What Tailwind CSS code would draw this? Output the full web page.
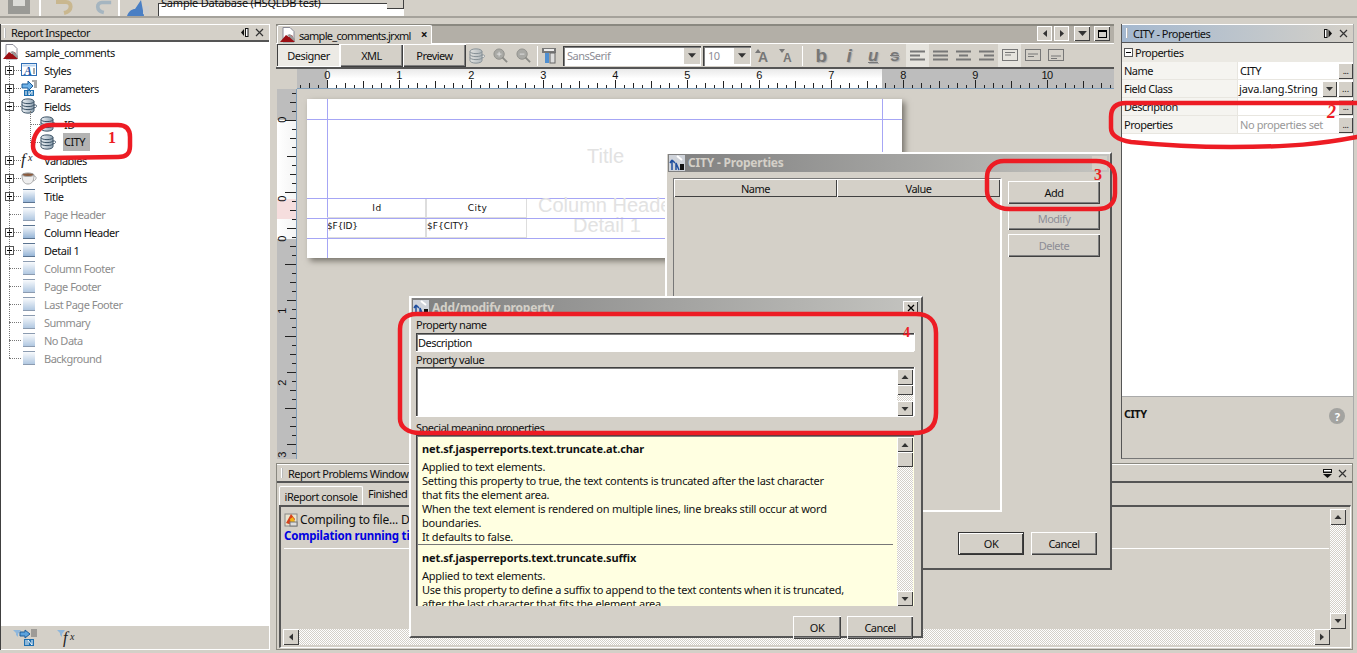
<!DOCTYPE html>
<html lang="en">
<head>
  <meta charset="UTF-8">
  <title>iReport Designer</title>
  <script src="https://cdn.jsdelivr.net/npm/@tailwindcss/browser@4"></script>
</head>
<body class="bg-[#d4d0c8]">
<svg class="absolute w-0 h-0">
  <defs>
    <linearGradient id="dbg" x1="0" x2="1" y1="0" y2="0"><stop offset="0" stop-color="#f0f4f7"/><stop offset="1" stop-color="#8da0b0"/></linearGradient>
    <linearGradient id="bandg" x1="0" x2="0" y1="0" y2="1"><stop offset="0" stop-color="#ffffff"/><stop offset="1" stop-color="#8fb0d4"/></linearGradient>
    <symbol id="plus" viewBox="0 0 9 9"><rect x=".5" y=".5" width="8" height="8" fill="#fff" stroke="#555"/><path d="M2 4.500h5M4.500 2v5" stroke="#000"/></symbol>
    <symbol id="minus" viewBox="0 0 9 9"><rect x=".5" y=".5" width="8" height="8" fill="#fff" stroke="#555"/><path d="M2 4.500h5" stroke="#000"/></symbol>
    <symbol id="db" viewBox="0 0 16 16"><path d="M13 7c3-.5 3.500 1.500 1.500 2.500L12 10z" fill="#fff" stroke="#4a6072"/><path d="M1 3.500c0-3.500 12-3.500 12 0v9c0 3.500-12 3.500-12 0z" fill="url(#dbg)" stroke="#3c5366"/><path d="M1 3.500c0 2.800 12 2.800 12 0M1 6.500c0 2.800 12 2.800 12 0M1 9.500c0 2.800 12 2.800 12 0" fill="none" stroke="#3c5366"/></symbol>
    <symbol id="report" viewBox="0 0 16 16"><path d="M3 .5h7l4 4v10.500H3z" fill="#fff" stroke="#8a8a96"/><path d="M0 15l6-7 3 2 3-2 3 7z" fill="#9c0f14"/><path d="M7 8l3-1 5 5v3z" fill="#9a9a9a"/></symbol>
    <symbol id="styles" viewBox="0 0 16 16"><rect x=".5" y="1.500" width="15" height="12" fill="#fff" stroke="#2f6eb5"/><rect x="1.500" y="2.500" width="13" height="2" fill="#b9d4ef"/><text x="3" y="12.500" font-family="Liberation Serif" font-style="italic" font-weight="700" font-size="12" fill="#1c56a5">A</text><path d="M12 7h2M12 9h2M12 11h2" stroke="#555"/></symbol>
    <symbol id="params" viewBox="0 0 16 16"><path d="M1 4h6V1l5 5-5 5V8H1z" fill="#6fb2e8" stroke="#1d5c99"/><path d="M11 1h5M13 3h3M13 5h3M13 7h3" stroke="#555"/><rect x="3" y="10" width="10" height="6" fill="#1d6fb0"/><path d="M5 11v4M8 11v4l3-4v4" stroke="#fff" fill="none"/></symbol>
    <symbol id="fx" viewBox="0 0 16 16"><text x="0" y="13" font-family="Liberation Serif" font-style="italic" font-size="16" fill="#222">f</text><text x="7" y="9" font-family="Liberation Serif" font-style="italic" font-size="10" fill="#222">x</text></symbol>
    <symbol id="cup" viewBox="0 0 16 16"><ellipse cx="7" cy="5" rx="6" ry="2" fill="#8a5a3c" stroke="#999"/><path d="M1 5c0 6 2 9 6 9s6-3 6-9c-2 2-10 2-12 0z" fill="#eee" stroke="#aaa"/><path d="M13 6c3 0 3 4-1 5" fill="none" stroke="#aaa"/></symbol>
    <symbol id="band" viewBox="0 0 16 16"><rect x="2" y="1" width="12" height="14" fill="url(#bandg)"/><path d="M2 1.500h12M2 14.500h12" stroke="#5a7390"/></symbol>
    <symbol id="bandoff" viewBox="0 0 16 16"><rect x="2" y="1" width="12" height="14" fill="url(#bandg)" opacity=".75"/><path d="M2 1.500h12M2 14.500h12" stroke="#8b9bb0"/></symbol>
    <symbol id="up" viewBox="0 0 7 4"><path d="M0 4L3.500 0 7 4z" fill="#333"/></symbol>
    <symbol id="down" viewBox="0 0 7 4"><path d="M0 0L3.500 4 7 0z" fill="#333"/></symbol>
    <symbol id="left" viewBox="0 0 4 7"><path d="M4 0L0 3.500 4 7z" fill="#333"/></symbol>
    <symbol id="right" viewBox="0 0 4 7"><path d="M0 0L4 3.500 0 7z" fill="#333"/></symbol>
    <symbol id="wizard" viewBox="0 0 16 16"><rect width="16" height="16" fill="#cfd3da"/><path d="M3 15V6M3 5l-2 3M3 5l3 3M7 15V8l3 7" stroke="#1f4f9f" stroke-width="1.500" fill="none"/><path d="M11 9h4v6h-4z" fill="#111"/><path d="M8 1l5 4" stroke="#fff" stroke-width="2"/></symbol>
    <symbol id="zoomplus" viewBox="0 0 16 16"><circle cx="6.500" cy="6.500" r="5.500" fill="#a9a9a5" stroke="#8f8f8b"/><path d="M4 6.500h5M6.500 4v5" stroke="#e0e0e0"/><path d="M10 10l5 5" stroke="#8a8a86" stroke-width="2"/></symbol>
    <symbol id="zoomminus" viewBox="0 0 16 16"><circle cx="6.500" cy="6.500" r="5.500" fill="#a9a9a5" stroke="#8f8f8b"/><path d="M4 6.500h5" stroke="#e0e0e0"/><path d="M10 10l5 5" stroke="#8a8a86" stroke-width="2"/></symbol>
    <pattern id="hticks" width="72" height="19" patternUnits="userSpaceOnUse" patternTransform="translate(30 0)"><path d="M.5 11v8M9.500 16v3M18.500 14v5M27.500 16v3M36.500 12v7M45.500 16v3M54.500 14v5M63.500 16v3" stroke="#222" fill="none"/></pattern>
    <pattern id="vticks" width="19" height="72" patternUnits="userSpaceOnUse" patternTransform="translate(0 31)"><path d="M8 .5h11M15 9.500h4M13 18.500h6M15 27.500h4M10 36.500h9M15 45.500h4M13 54.500h6M15 63.500h4" stroke="#222" fill="none"/></pattern>
  </defs>
</svg>

<div class="relative w-[1357px] h-[653px] overflow-hidden bg-[#d4d0c8] text-[11px] leading-none tracking-[-0.5px] text-[#111] font-['Noto_Sans',sans-serif]">

  <!-- top toolbar -->
  <div class="h-[18px] border-b-2 border-b-[#a5a29b] flex items-end overflow-hidden">
    <div class="flex items-center gap-[10px] pl-[8px] w-[41px] h-[16px] border-r-2 border-r-[#fff]">
      <svg class="w-[22px] h-[16px]" viewBox="0 0 22 16"><path d="M0 0h22v14H0z" fill="#9a9a96"/><path d="M5 0h12v6H5z" fill="#dcdcd8"/></svg>
    </div>
    <div class="flex items-center gap-[14px] pl-[10px] w-[79px] h-[16px] border-r-2 border-r-[#fff]">
      <svg class="w-[26px] h-[16px]" viewBox="0 0 24 16"><path d="M4 2h10c6 0 7 9-2 11" fill="none" stroke="#c9b78f" stroke-width="4"/></svg>
      <svg class="w-[22px] h-[16px]" viewBox="0 0 24 16"><path d="M22 2H12C6 2 5 11 14 13" fill="none" stroke="#a5b5c0" stroke-width="4"/></svg>
    </div>
    <div class="flex items-center pl-[7px] h-[16px] gap-[7px]">
      <svg class="w-[24px] h-[16px]" viewBox="0 0 24 16"><path d="M0 16c2-6 6-7 8-7l6-9 3 16z" fill="#4a7fc4"/><rect x="16" y="6" width="6" height="8" fill="#cfcfcf"/></svg>
      <div class="flex w-[246px] h-[24px] bg-white mb-[-14px] shadow-[inset_1px_1px_0_#404040] pl-[3px] items-start">
        <span class="flex-1 mt-[-6px] text-[11px] tracking-[-0.2px]">Sample Database (HSQLDB test)</span>
      </div>
    </div>
    <div class="w-[17px] h-[9px] mb-[7px] bg-[#d4d0c8] border-r border-b border-r-[#404040] border-b-[#404040] ml-[-17px]"></div>
  </div>

  <div class="flex pt-[6px] h-[635px]">
    <!-- report inspector -->
    <div class="w-[270px] h-[626px] flex flex-col border-l border-l-[#404040] border-r border-r-white shrink-0">
      <div class="h-[18px] flex items-center border-b-2 border-b-[#555] border-t border-t-white pl-[3px]">
        <span class="w-[2px] h-[10px] bg-[#bbb] border-l border-l-white mr-[5px]"></span>
        <span class="flex-1">Report Inspector</span>
        <svg class="w-[8px] h-[9px] mr-[6px]" viewBox="0 0 8 9"><path d="M0 4.500L3 1v7z" fill="#111"/><rect x="4" y="0" width="3.500" height="9" fill="#111"/><rect x="5" y="1" width="1.500" height="7" fill="#fff"/></svg>
        <svg class="w-[9px] h-[9px] mr-[5px]" viewBox="0 0 9 9"><path d="M1 1l7 7M8 1L1 8" stroke="#333" stroke-width="1.200"/></svg>
      </div>
      <div class="relative flex-1 bg-white pt-[1px]">
        <div class="absolute left-[8px] top-[19px] h-[297px] border-l border-dotted border-l-[#777]"></div>
        <div class="absolute left-[29px] top-[69px] h-[30px] border-l border-dotted border-l-[#777]"></div>
        <div class="flex items-center h-[18px] pl-[2px]"><svg class="w-[16px] h-[16px]"><use href="#report"/></svg><span class="ml-[6px]">sample_comments</span></div>
        <div class="flex items-center h-[18px] pl-[4px]"><svg class="w-[9px] h-[9px] bg-white"><use href="#plus"/></svg><span class="w-[7px] border-t border-dotted border-t-[#777]"></span><svg class="w-[16px] h-[16px]"><use href="#styles"/></svg><span class="ml-[7px]">Styles</span></div>
        <div class="flex items-center h-[18px] pl-[4px]"><svg class="w-[9px] h-[9px] bg-white"><use href="#plus"/></svg><span class="w-[7px] border-t border-dotted border-t-[#777]"></span><svg class="w-[16px] h-[16px]"><use href="#params"/></svg><span class="ml-[7px]">Parameters</span></div>
        <div class="flex items-center h-[18px] pl-[4px]"><svg class="w-[9px] h-[9px] bg-white"><use href="#minus"/></svg><span class="w-[7px] border-t border-dotted border-t-[#777]"></span><svg class="w-[16px] h-[16px]"><use href="#db"/></svg><span class="ml-[7px]">Fields</span></div>
        <div class="flex items-center h-[18px] pl-[29px]"><span class="w-[10px] border-t border-dotted border-t-[#777]"></span><svg class="w-[16px] h-[16px]"><use href="#db"/></svg><span class="ml-[8px]">ID</span></div>
        <div class="flex items-center h-[18px] pl-[29px]"><span class="w-[10px] border-t border-dotted border-t-[#777]"></span><svg class="w-[16px] h-[16px]"><use href="#db"/></svg><span class="ml-[7px] bg-[#b3b3b3] h-[18px] leading-[18px] px-[1px] w-[27px]">CITY</span></div>
        <div class="flex items-center h-[18px] pl-[4px]"><svg class="w-[9px] h-[9px] bg-white"><use href="#plus"/></svg><span class="w-[7px] border-t border-dotted border-t-[#777]"></span><svg class="w-[16px] h-[16px]"><use href="#fx"/></svg><span class="ml-[7px]">Variables</span></div>
        <div class="flex items-center h-[18px] pl-[4px]"><svg class="w-[9px] h-[9px] bg-white"><use href="#plus"/></svg><span class="w-[7px] border-t border-dotted border-t-[#777]"></span><svg class="w-[16px] h-[16px]"><use href="#cup"/></svg><span class="ml-[7px]">Scriptlets</span></div>
        <div class="flex items-center h-[18px] pl-[4px]"><svg class="w-[9px] h-[9px] bg-white"><use href="#plus"/></svg><span class="w-[7px] border-t border-dotted border-t-[#777]"></span><svg class="w-[16px] h-[16px]"><use href="#band"/></svg><span class="ml-[7px]">Title</span></div>
        <div class="flex items-center h-[18px] pl-[8px] text-[#8c8c8c]"><span class="w-[12px] border-t border-dotted border-t-[#777]"></span><svg class="w-[16px] h-[16px]"><use href="#bandoff"/></svg><span class="ml-[7px]">Page Header</span></div>
        <div class="flex items-center h-[18px] pl-[4px]"><svg class="w-[9px] h-[9px] bg-white"><use href="#plus"/></svg><span class="w-[7px] border-t border-dotted border-t-[#777]"></span><svg class="w-[16px] h-[16px]"><use href="#band"/></svg><span class="ml-[7px]">Column Header</span></div>
        <div class="flex items-center h-[18px] pl-[4px]"><svg class="w-[9px] h-[9px] bg-white"><use href="#plus"/></svg><span class="w-[7px] border-t border-dotted border-t-[#777]"></span><svg class="w-[16px] h-[16px]"><use href="#band"/></svg><span class="ml-[7px]">Detail 1</span></div>
        <div class="flex items-center h-[18px] pl-[8px] text-[#8c8c8c]"><span class="w-[12px] border-t border-dotted border-t-[#777]"></span><svg class="w-[16px] h-[16px]"><use href="#bandoff"/></svg><span class="ml-[7px]">Column Footer</span></div>
        <div class="flex items-center h-[18px] pl-[8px] text-[#8c8c8c]"><span class="w-[12px] border-t border-dotted border-t-[#777]"></span><svg class="w-[16px] h-[16px]"><use href="#bandoff"/></svg><span class="ml-[7px]">Page Footer</span></div>
        <div class="flex items-center h-[18px] pl-[8px] text-[#8c8c8c]"><span class="w-[12px] border-t border-dotted border-t-[#777]"></span><svg class="w-[16px] h-[16px]"><use href="#bandoff"/></svg><span class="ml-[7px]">Last Page Footer</span></div>
        <div class="flex items-center h-[18px] pl-[8px] text-[#8c8c8c]"><span class="w-[12px] border-t border-dotted border-t-[#777]"></span><svg class="w-[16px] h-[16px]"><use href="#bandoff"/></svg><span class="ml-[7px]">Summary</span></div>
        <div class="flex items-center h-[18px] pl-[8px] text-[#8c8c8c]"><span class="w-[12px] border-t border-dotted border-t-[#777]"></span><svg class="w-[16px] h-[16px]"><use href="#bandoff"/></svg><span class="ml-[7px]">No Data</span></div>
        <div class="flex items-center h-[18px] pl-[8px] text-[#8c8c8c]"><span class="w-[12px] border-t border-dotted border-t-[#777]"></span><svg class="w-[16px] h-[16px]"><use href="#bandoff"/></svg><span class="ml-[7px]">Background</span></div>
      </div>
      <div class="h-[24px] bg-[#d4d0c8] flex items-center pl-[12px] gap-[20px] border-b border-b-white">
        <svg class="w-[24px] h-[18px]" viewBox="0 0 24 18"><path d="M0 1h8L5 5v3L3 6V4z" fill="#8fb7dc"/><path d="M7 3h5V1l5 4-5 4V7H7z" fill="#5aa2dd" stroke="#1d5c99"/><path d="M18 1h6M18 3h6M18 5h6M18 7h6" stroke="#666"/><rect x="11" y="10" width="10" height="7" fill="#1d6fb0"/><path d="M13 11v5M15 16v-5l4 5v-5" stroke="#fff" fill="none"/></svg>
        <svg class="w-[20px] h-[18px]" viewBox="0 0 20 18"><path d="M0 1h8L5 5v3L3 6V4z" fill="#8fb7dc"/><text x="6" y="14" font-family="Liberation Serif" font-style="italic" font-size="16" fill="#222">f</text><text x="13" y="11" font-family="Liberation Serif" font-style="italic" font-size="10" fill="#222">x</text></svg>
      </div>
    </div>

    <div class="w-[6px] shrink-0"></div>

    <div class="w-[1077px] shrink-0 flex flex-col">
      <div class="flex h-[435px]">
        <!-- designer -->
        <div class="w-[838px] shrink-0 flex flex-col border-t-2 border-t-[#8a8880]">
          <div class="h-[18px] bg-[#b3afa7] flex items-end border-b border-b-white">
            <div class="w-[155px] ml-[1px] h-[19px] bg-[#d4d0c8] border border-b-0 border-white rounded-t-[2px] flex items-center pl-[2px] mb-[-1px]">
              <svg class="w-[16px] h-[16px]"><use href="#report"/></svg>
              <span class="ml-[3px] flex-1 tracking-[-0.7px]">sample_comments.jrxml</span>
              <span class="text-[12px] font-bold mr-[4px]">×</span>
            </div>
            <div class="flex-1"></div>
            <div class="flex items-center h-[18px] pb-[1px] mr-[4px]">
              <span class="w-[15px] h-[15px] bg-[#d4d0c8] flex items-center justify-center border border-white"><svg class="w-[4px] h-[7px]"><use href="#left"/></svg></span>
              <span class="w-[15px] h-[15px] ml-[2px] bg-[#d4d0c8] flex items-center justify-center border border-white"><svg class="w-[4px] h-[7px]"><use href="#right"/></svg></span>
              <span class="w-[16px] h-[15px] ml-[5px] bg-[#d4d0c8] flex items-center justify-center shadow-[inset_1px_1px_0_#fff,inset_-1px_-1px_0_#404040]"><svg class="w-[9px] h-[5px]"><use href="#down"/></svg></span>
              <span class="w-[16px] h-[15px] ml-[4px] bg-[#d4d0c8] flex items-center justify-center shadow-[inset_1px_1px_0_#fff,inset_-1px_-1px_0_#404040]"><span class="w-[9px] h-[8px] border border-t-2 border-black"></span></span>
            </div>
          </div>
          <div class="h-[25px] flex items-center border-b-2 border-b-[#555] pl-[1px]">
            <span class="w-[63px] h-[23px] bg-[#eceae5] flex items-center justify-center shadow-[inset_-1px_-1px_0_#fff,inset_1px_1px_0_#404040]">Designer</span>
            <span class="w-[63px] h-[23px] flex items-center justify-center shadow-[inset_1px_1px_0_#fff,inset_-1px_-1px_0_#404040,inset_-2px_-2px_0_#808080]">XML</span>
            <span class="w-[63px] h-[23px] flex items-center justify-center shadow-[inset_1px_1px_0_#fff,inset_-1px_-1px_0_#404040,inset_-2px_-2px_0_#808080]">Preview</span>
            <svg class="w-[16px] h-[16px] ml-[3px] opacity-50"><use href="#db"/></svg>
            <svg class="w-[15px] h-[15px] ml-[8px]"><use href="#zoomplus"/></svg>
            <svg class="w-[15px] h-[15px] ml-[8px]"><use href="#zoomminus"/></svg>
            <span class="w-[1px] h-[20px] bg-[#999] border-r border-r-white ml-[6px]"></span>
            <svg class="w-[16px] h-[17px] ml-[3px]" viewBox="0 0 16 17"><path d="M1 1h14v5H1z" fill="#777"/><path d="M3 2h10v2H3z" fill="#eee"/><rect x="4" y="6" width="4" height="10" fill="#4f8fd1"/><rect x="9" y="6" width="5" height="10" fill="#ddd" stroke="#666"/></svg>
            <span class="w-[138px] h-[20px] ml-[6px] bg-white flex items-center justify-between pl-[4px] shadow-[inset_1px_1px_0_#404040,inset_2px_2px_0_#808080,inset_-1px_-1px_0_#fff] text-[#8d8d96]">SansSerif<span class="w-[16px] h-[16px] mr-[1px] bg-[#d4d0c8] flex items-center justify-center"><svg class="w-[8px] h-[5px]"><use href="#down"/></svg></span></span>
            <span class="w-[48px] h-[20px] ml-[2px] bg-white flex items-center justify-between pl-[5px] shadow-[inset_1px_1px_0_#404040,inset_2px_2px_0_#808080,inset_-1px_-1px_0_#fff] text-[#8d8d96]">10<span class="w-[16px] h-[16px] mr-[1px] bg-[#d4d0c8] flex items-center justify-center"><svg class="w-[8px] h-[5px]"><use href="#down"/></svg></span></span>
            <svg class="w-[24px] h-[16px] ml-[1px]" viewBox="0 0 24 16"><path d="M3 5L6 1l3 4z" fill="#777"/><text x="6" y="14" font-family="Liberation Sans" font-weight="700" font-size="14" letter-spacing="0" fill="#777">A</text></svg>
            <svg class="w-[22px] h-[16px]" viewBox="0 0 22 16"><path d="M3 1l3 4 3-4z" fill="#777"/><text x="7" y="14" font-family="Liberation Sans" font-weight="700" font-size="12" letter-spacing="0" fill="#777">A</text></svg>
            <span class="w-[1px] h-[20px] bg-[#999] border-r border-r-white ml-[4px]"></span>
            <span class="w-[28px] ml-[4px] text-[19px] font-bold text-[#777] font-['Liberation_Sans',sans-serif] text-center [text-shadow:1px_1px_1px_#aaa]">b</span>
            <span class="w-[28px] text-[19px] font-bold italic text-[#777] font-['Liberation_Sans',sans-serif] text-center [text-shadow:1px_1px_1px_#aaa]">i</span>
            <span class="w-[20px] text-[17px] font-bold italic underline text-[#777] font-['Liberation_Sans',sans-serif] text-center [text-shadow:1px_1px_1px_#aaa]">u</span>
            <span class="w-[23px] text-[17px] font-bold line-through text-[#777] font-['Liberation_Sans',sans-serif] text-center [text-shadow:1px_1px_1px_#aaa]">s</span>
            <svg class="w-[23px] h-[23px] bg-[#e6e4de]" viewBox="0 0 23 23"><path d="M4 7.500h15M4 11.500h10M4 15.500h15" stroke="#777" stroke-width="2"/></svg>
            <svg class="w-[23px] h-[23px]" viewBox="0 0 23 23"><path d="M4 7.500h15M4 11.500h15M4 15.500h15" stroke="#777" stroke-width="2"/></svg>
            <svg class="w-[23px] h-[23px]" viewBox="0 0 23 23"><path d="M4 7.500h15M7 11.500h9M4 15.500h15" stroke="#777" stroke-width="2"/></svg>
            <svg class="w-[23px] h-[23px]" viewBox="0 0 23 23"><path d="M4 7.500h15M9 11.500h10M4 15.500h15" stroke="#777" stroke-width="2"/></svg>
            <svg class="w-[23px] h-[23px] bg-[#e6e4de]" viewBox="0 0 23 23"><rect x="4.500" y="5.500" width="15" height="11" fill="none" stroke="#777"/><path d="M7 8.500h10M7 11h6" stroke="#777"/></svg>
            <svg class="w-[23px] h-[23px]" viewBox="0 0 23 23"><rect x="4.500" y="5.500" width="15" height="11" fill="none" stroke="#777"/><path d="M7 10h10M7 12.500h6" stroke="#777"/></svg>
            <svg class="w-[23px] h-[23px]" viewBox="0 0 23 23"><rect x="4.500" y="5.500" width="15" height="11" fill="none" stroke="#777"/><path d="M7 12h10M7 14.500h6" stroke="#777"/></svg>
          </div>
          <div class="flex h-[20px] pl-[21px]">
            <svg class="w-[817px] h-[20px]" viewBox="0 0 817 20">
              <defs><linearGradient id="rw" x1="0" x2="0" y1="0" y2="1"><stop offset="0" stop-color="#e9e9e9"/><stop offset=".5" stop-color="#fff"/><stop offset="1" stop-color="#fff"/></linearGradient></defs>
              <rect width="30" height="19" fill="#bdbdbd"/><rect x="30" width="555" height="19" fill="url(#rw)"/><rect x="585" width="232" height="19" fill="#bdbdbd"/>
              <rect width="817" height="19" fill="url(#hticks)"/><path d="M0 19.500h817" stroke="#7f9db9"/>
              <g font-family="Liberation Sans" font-size="11" text-anchor="middle" fill="#111"><text x="30" y="10">0</text><text x="102" y="10">1</text><text x="174" y="10">2</text><text x="246" y="10">3</text><text x="318" y="10">4</text><text x="390" y="10">5</text><text x="462" y="10">6</text><text x="534" y="10">7</text><text x="606" y="10">8</text><text x="678" y="10">9</text><text x="750" y="10">10</text></g>
            </svg>
          </div>
          <div class="flex flex-1 min-h-0 overflow-hidden">
            <svg class="w-[20px] h-[370px] ml-[1px] shrink-0" viewBox="0 0 20 370">
              <defs><linearGradient id="rv" x1="0" x2="1" y1="0" y2="0"><stop offset="0" stop-color="#fff"/><stop offset="1" stop-color="#f4f4f4"/></linearGradient></defs>
              <rect width="19" height="370" fill="#bdbdbd"/><rect y="31" width="19" height="79" fill="url(#rv)"/><rect y="110" width="19" height="20" fill="#f6dede"/><rect y="130" width="19" height="20" fill="url(#rv)"/>
              <rect width="19" height="370" fill="url(#vticks)"/><path d="M19.500 0v370" stroke="#7f9db9"/>
              <g font-family="Liberation Sans" font-size="11" text-anchor="middle" fill="#111"><text transform="translate(9 31) rotate(-90)">0</text><text transform="translate(9 110) rotate(-90)">0</text><text transform="translate(9 150) rotate(-90)">0</text><text transform="translate(9 222) rotate(-90)">1</text><text transform="translate(9 294) rotate(-90)">2</text><text transform="translate(9 366) rotate(-90)">3</text></g>
            </svg>
            <div class="pl-[10px] pt-[10px]">
              <div class="relative w-[595px] h-[159px] bg-white shadow-[3px_3px_6px_#77736b] tracking-normal">
                <!-- band guides -->
                <div class="absolute left-[20px] top-0 bottom-0 w-px bg-[#a6a6f5]"></div>
                <div class="absolute left-[575px] top-0 bottom-0 w-px bg-[#a6a6f5]"></div>
                <div class="h-[21px] border-b border-b-[#a6a6f5]"></div>
                <div class="h-[79px] border-b border-b-[#a6a6f5] flex items-center justify-center pl-[2px] pb-[6px] text-[20px] text-[#e2e2e2] font-['Liberation_Sans',sans-serif]">Title</div>
                <div class="h-[20px] border-b border-b-[#a6a6f5] flex pl-[20px] relative">
                  <span class="w-[100px] border-r-2 border-r-[#ddd] border-b border-b-[#ddd] flex items-center justify-center pl-[2px] text-[9px] tracking-[.5px] font-['DejaVu_Sans',sans-serif]">Id</span>
                  <span class="w-[100px] border-r border-r-[#ddd] border-b border-b-[#ddd] flex items-center justify-center pl-[2px] text-[9px] tracking-[.5px] font-['DejaVu_Sans',sans-serif]">City</span>
                  <span class="flex-1 pl-[11px] mt-[-1px] text-[20px] leading-[14px] text-[#e2e2e2] font-['Liberation_Sans',sans-serif] whitespace-nowrap">Column Header</span>
                </div>
                <div class="h-[20px] border-b border-b-[#a6a6f5] flex pl-[20px]">
                  <span class="w-[100px] border-r-2 border-r-[#ddd] border-b border-b-[#ddd] text-[9px] pt-[3px] tracking-[-0.2px] font-['DejaVu_Sans',sans-serif]">$F{ID}</span>
                  <span class="w-[100px] border-r border-r-[#ddd] border-b border-b-[#ddd] text-[9px] pt-[3px] font-['DejaVu_Sans',sans-serif]">$F{CITY}</span>
                  <span class="flex-1 pl-[46px] mt-[-1px] text-[20px] leading-[14px] text-[#e2e2e2] font-['Liberation_Sans',sans-serif] whitespace-nowrap">Detail 1</span>
                </div>
              </div>
            </div>
          </div>
        </div>

        <div class="w-[7px] shrink-0"></div>

        <!-- properties panel -->
        <div class="w-[233px] shrink-0 flex flex-col border-l border-l-[#555] border-r border-r-[#aaa] border-b border-b-[#777]">
          <div class="h-[19px] flex items-center pl-[4px] pb-[1px] border-t border-t-white border-b border-b-[#555] bg-linear-to-r from-[#a4b8cf] to-[#d4d0c8]">
            <span class="w-[2px] h-[10px] bg-[#bbb] border-l border-l-white mr-[5px]"></span>
            <span class="flex-1">CITY - Properties</span>
            <svg class="w-[8px] h-[9px] mr-[7px]" viewBox="0 0 8 9"><rect x="0" y="0" width="3.500" height="9" fill="#111"/><rect x="1" y="1" width="1.500" height="7" fill="#fff"/><path d="M4.500 0.500L8 4.500 4.500 8.500z" fill="#111"/></svg>
            <svg class="w-[9px] h-[9px] mr-[5px]" viewBox="0 0 9 9"><path d="M1 1l7 7M8 1L1 8" stroke="#333" stroke-width="1.200"/></svg>
          </div>
          <div class="h-[19px] bg-[#ebe9e3] flex items-center pl-[2px]">
            <svg class="w-[9px] h-[9px]"><use href="#minus"/></svg><span class="ml-[2px]">Properties</span>
          </div>
          <div class="flex-1 bg-white">
            <div class="grid grid-cols-[116px_1fr] h-[18px] border-b border-b-[#e8e6e0]"><span class="pl-[2px] flex items-center border-r border-r-[#e8e6e0] bg-[#f5f4f0]">Name</span><span class="flex items-center pl-[2px]">CITY<span class="ml-auto w-[15px] h-[16px] bg-[#d4d0c8] flex items-center justify-center shadow-[inset_1px_1px_0_#fff,inset_-1px_-1px_0_#404040] text-[9px]">...</span></span></div>
            <div class="grid grid-cols-[116px_1fr] h-[18px] border-b border-b-[#e8e6e0]"><span class="pl-[2px] flex items-center border-r border-r-[#e8e6e0] bg-[#f5f4f0]">Field Class</span><span class="flex items-center pl-[1px] whitespace-nowrap tracking-[-0.1px]">java.lang.String<span class="ml-auto w-[15px] h-[16px] bg-[#d4d0c8] flex items-center justify-center shadow-[inset_1px_1px_0_#fff,inset_-1px_-1px_0_#404040]"><svg class="w-[7px] h-[4px]"><use href="#down"/></svg></span><span class="ml-[1px] w-[15px] h-[16px] bg-[#d4d0c8] flex items-center justify-center shadow-[inset_1px_1px_0_#fff,inset_-1px_-1px_0_#404040] text-[9px]">...</span></span></div>
            <div class="grid grid-cols-[116px_1fr] h-[18px] border-b border-b-[#e8e6e0]"><span class="pl-[2px] flex items-center border-r border-r-[#e8e6e0] bg-[#f5f4f0]">Description</span><span class="flex items-center"><span class="ml-auto w-[15px] h-[16px] bg-[#d4d0c8] flex items-center justify-center shadow-[inset_1px_1px_0_#fff,inset_-1px_-1px_0_#404040] text-[9px]">...</span></span></div>
            <div class="grid grid-cols-[116px_1fr] h-[18px] border-b border-b-[#e8e6e0]"><span class="pl-[2px] flex items-center border-r border-r-[#e8e6e0] bg-[#f5f4f0]">Properties</span><span class="flex items-center pl-[2px] text-[#999] whitespace-nowrap tracking-[-0.4px]">No properties set<span class="ml-auto w-[15px] h-[16px] bg-[#d4d0c8] flex items-center justify-center shadow-[inset_1px_1px_0_#fff,inset_-1px_-1px_0_#404040] text-[9px] text-[#111]">...</span></span></div>
          </div>
          <div class="h-[62px] flex items-start justify-between pl-[2px] pr-[8px] pt-[11px] border-t border-t-[#aaa]">
            <span class="font-bold">CITY</span>
            <span class="w-[16px] h-[16px] rounded-full bg-[#a3a3a0] text-white font-bold flex items-center justify-center text-[11px]">?</span>
          </div>
        </div>
      </div>

      <!-- console -->
      <div class="mt-[4px] h-[187px] flex flex-col border border-[#8a8880]">
        <div class="h-[19px] bg-[#d4d0c8] flex items-center pl-[4px] border-t border-t-white border-b-2 border-b-[#555]">
          <span class="w-[2px] h-[10px] bg-[#bbb] border-l border-l-white mr-[5px]"></span>
          <span class="flex-1">Report Problems Window</span>
          <svg class="w-[9px] h-[9px] mr-[6px]" viewBox="0 0 9 9"><rect x="0" y="0" width="9" height="4" fill="#111"/><rect x="1" y="1" width="7" height="1.500" fill="#fff"/><path d="M0 5h9L4.500 9z" fill="#111"/></svg>
          <svg class="w-[9px] h-[9px] mr-[5px]" viewBox="0 0 9 9"><path d="M1 1l7 7M8 1L1 8" stroke="#333" stroke-width="1.200"/></svg>
        </div>
        <div class="h-[22px] flex items-end pl-[2px]">
          <span class="w-[84px] h-[19px] flex items-center justify-center border border-white border-b-0 rounded-t-[2px]">iReport console</span>
          <span class="pl-[5px] h-[22px] pt-[5px]">Finished</span>
        </div>
        <div class="relative flex-1 ml-[2px] mr-[1px] mb-[1px] border-t-2 border-t-[#555] border-l-2 border-l-[#555] border-r border-r-white border-b border-b-white">
          <div class="pl-[3px] pt-[5px]">
            <div class="flex items-center h-[16px]"><svg class="w-[14px] h-[14px]" viewBox="0 0 14 14"><rect x="1" y="1" width="12" height="12" fill="#e9e4cf" stroke="#888"/><path d="M2 10L7 1l4 5-3 6z" fill="#d6421c"/><path d="M6 6l3-2 2 5-4 3z" fill="#f1b416"/><rect x="6" y="9" width="7" height="4" fill="#ddd" stroke="#777"/></svg><span class="ml-[2px] text-[12px] tracking-[-0.2px] whitespace-nowrap">Compiling to file... D</span></div>
            <div class="h-[16px] text-[11.500px] leading-[16px] tracking-[-0.2px] font-bold text-[#0000e0] whitespace-nowrap">Compilation running ti</div>
            <div class="w-[1045px] h-[1px] bg-[#404040] border-b border-b-white mt-[4px]"></div>
          </div>
          <!-- scrollbars -->
          <div class="absolute right-[4px] top-[2px] w-[16px] h-[120px] flex flex-col justify-between bg-[repeating-conic-gradient(#fff_0_25%,#d4d0c8_0_50%)] bg-[length:2px_2px]">
            <span class="h-[16px] bg-[#d4d0c8] flex items-center justify-center shadow-[inset_1px_1px_0_#fff,inset_-1px_-1px_0_#404040]"><svg class="w-[8px] h-[4px]"><use href="#up"/></svg></span>
            <span class="h-[16px] bg-[#d4d0c8] flex items-center justify-center shadow-[inset_1px_1px_0_#fff,inset_-1px_-1px_0_#404040]"><svg class="w-[8px] h-[4px]"><use href="#down"/></svg></span>
          </div>
          <div class="absolute left-[2px] right-[20px] bottom-[2px] h-[16px] flex justify-between bg-[repeating-conic-gradient(#fff_0_25%,#d4d0c8_0_50%)] bg-[length:2px_2px]">
            <span class="w-[16px] bg-[#d4d0c8] flex items-center justify-center shadow-[inset_1px_1px_0_#fff,inset_-1px_-1px_0_#404040]"><svg class="w-[4px] h-[8px]"><use href="#left"/></svg></span>
            <span class="w-[16px] bg-[#d4d0c8] flex items-center justify-center shadow-[inset_1px_1px_0_#fff,inset_-1px_-1px_0_#404040]"><svg class="w-[4px] h-[8px]"><use href="#right"/></svg></span>
          </div>
        </div>
      </div>
    </div>
  </div>

  <!-- CITY - Properties dialog -->
  <div class="absolute left-[665px] top-[152px] w-[447px] h-[418px] bg-[#d4d0c8] border-2 border-t-white border-l-white border-r-[#555] border-b-[#555] flex flex-col">
    <div class="h-[18px] mx-[1px] flex items-center bg-linear-to-r from-[#808080] to-[#c4c4c0] text-[#d4d0c8] font-bold text-[12px] tracking-[-0.2px]">
      <svg class="w-[16px] h-[16px] ml-[1px]"><use href="#wizard"/></svg>
      <span class="ml-[3px] flex-1">CITY - Properties</span>
      <span class="w-[15px] h-[14px] mr-[2px] bg-[#d4d0c8]"></span>
    </div>
    <div class="flex flex-1 pl-[6px] pt-[6px]">
      <div class="w-[329px] h-[334px] border-t border-t-[#777] border-l border-l-[#777] border-r-2 border-r-white border-b-2 border-b-white">
        <div class="grid grid-cols-2 h-[18px]">
          <span class="flex items-center justify-center shadow-[inset_1px_1px_0_#fff,inset_-1px_-1px_0_#404040]">Name</span>
          <span class="flex items-center justify-center shadow-[inset_1px_1px_0_#fff,inset_-1px_-1px_0_#404040]">Value</span>
        </div>
      </div>
      <div class="ml-[6px] pt-[3px] flex flex-col gap-[3px]">
        <span class="w-[92px] h-[23px] flex items-center justify-center shadow-[inset_1px_1px_0_#fff,inset_-1px_-1px_0_#404040,inset_-2px_-2px_0_#808080]">Add</span>
        <span class="w-[92px] h-[23px] flex items-center justify-center text-[#8d8d96] shadow-[inset_1px_1px_0_#fff,inset_-1px_-1px_0_#404040,inset_-2px_-2px_0_#808080]">Modify</span>
        <span class="w-[92px] h-[23px] mt-[1px] flex items-center justify-center text-[#8d8d96] shadow-[inset_1px_1px_0_#fff,inset_-1px_-1px_0_#404040,inset_-2px_-2px_0_#808080]">Delete</span>
      </div>
    </div>
    <div class="flex justify-end gap-[7px] pr-[13px] pb-[13px]">
      <span class="w-[66px] h-[23px] flex items-center justify-center border border-[#333] shadow-[inset_1px_1px_0_#fff,inset_-1px_-1px_0_#404040]">OK</span>
      <span class="w-[66px] h-[23px] flex items-center justify-center shadow-[inset_1px_1px_0_#fff,inset_-1px_-1px_0_#404040,inset_-2px_-2px_0_#808080]">Cancel</span>
    </div>
  </div>

  <!-- Add/modify property dialog -->
  <div class="absolute left-[409px] top-[296px] w-[514px] h-[342px] bg-[#d4d0c8] border-2 border-t-white border-l-white border-r-[#555] border-b-[#555] flex flex-col">
    <div class="h-[18px] mx-[1px] flex items-center pt-[2px] bg-linear-to-r from-[#808080] to-[#c4c4c0] text-[#d4d0c8] font-bold text-[12px] tracking-[-0.2px] shrink-0">
      <svg class="w-[16px] h-[16px] ml-[1px]"><use href="#wizard"/></svg>
      <span class="ml-[3px] flex-1">Add/modify property</span>
      <span class="w-[15px] h-[14px] mr-[2px] bg-[#d4d0c8] flex items-center justify-center shadow-[inset_1px_1px_0_#fff,inset_-1px_-1px_0_#404040]"><svg class="w-[8px] h-[8px]" viewBox="0 0 8 8"><path d="M1 1l6 6M7 1L1 7" stroke="#000" stroke-width="1.300"/></svg></span>
    </div>
    <div class="pl-[5px] pr-[7px] flex flex-col">
      <div class="h-[11px] mt-[3px] flex items-center">Property name</div>
      <div class="h-[18px] mt-[3px] bg-white flex items-center pl-[2px] shadow-[inset_1px_1px_0_#404040,inset_2px_2px_0_#808080,0_1px_0_#fff,1px_0_0_#fff]">Description</div>
      <div class="h-[11px] mt-[3px] flex items-center">Property value</div>
      <div class="h-[49px] mt-[2px] bg-white flex justify-end pr-[1px] shadow-[inset_1px_1px_0_#404040,inset_2px_2px_0_#808080,0_1px_0_#fff,1px_0_0_#fff]">
        <div class="w-[16px] mt-[2px] flex flex-col bg-[repeating-conic-gradient(#fff_0_25%,#d4d0c8_0_50%)] bg-[length:2px_2px]">
          <span class="h-[16px] bg-[#d4d0c8] flex items-center justify-center shadow-[inset_1px_1px_0_#fff,inset_-1px_-1px_0_#404040]"><svg class="w-[8px] h-[4px]"><use href="#up"/></svg></span>
          <span class="h-[10px] bg-[#d4d0c8] shadow-[inset_1px_1px_0_#fff,inset_-1px_-1px_0_#404040]"></span>
          <span class="flex-1"></span>
          <span class="h-[15px] bg-[#d4d0c8] flex items-center justify-center shadow-[inset_1px_1px_0_#fff,inset_-1px_-1px_0_#404040]"><svg class="w-[8px] h-[4px]"><use href="#down"/></svg></span>
        </div>
      </div>
      <div class="h-[11px] mt-[6px] flex items-center">Special meaning properties</div>
      <div class="relative h-[171px] mt-[2px] bg-[#ffffe1] overflow-hidden flex shadow-[inset_1px_1px_0_#404040,inset_2px_2px_0_#808080] tracking-[-0.23px]">
        <div class="flex-1 pl-[6px] pr-[4px] pt-[7px] min-w-0 leading-[14px]">
          <div class="font-bold h-[14px] tracking-[-0.1px]">net.sf.jasperreports.text.truncate.at.char</div>
          <div class="mt-[4px]">Applied to text elements.</div>
          <div>Setting this property to true, the text contents is truncated after the last character</div>
          <div>that fits the element area.</div>
          <div>When the text element is rendered on multiple lines, line breaks still occur at word</div>
          <div>boundaries.</div>
          <div>It defaults to false.</div>
          <div class="h-[1px] bg-[#777] mb-[6px] ml-[-4px]"></div>
          <div class="font-bold h-[14px] tracking-[-0.1px]">net.sf.jasperreports.text.truncate.suffix</div>
          <div class="mt-[4px]">Applied to text elements.</div>
          <div class="whitespace-nowrap tracking-[-0.27px]">Use this property to define a suffix to append to the text contents when it is truncated,</div>
          <div class="whitespace-nowrap">after the last character that fits the element area.</div>
        </div>
        <div class="w-[16px] mr-[1px] mt-[2px] flex flex-col bg-[repeating-conic-gradient(#fff_0_25%,#d4d0c8_0_50%)] bg-[length:2px_2px]">
          <span class="h-[15px] bg-[#d4d0c8] flex items-center justify-center shadow-[inset_1px_1px_0_#fff,inset_-1px_-1px_0_#404040]"><svg class="w-[8px] h-[4px]"><use href="#up"/></svg></span>
          <span class="h-[15px] bg-[#d4d0c8] shadow-[inset_1px_1px_0_#fff,inset_-1px_-1px_0_#404040]"></span>
          <span class="flex-1"></span>
          <span class="h-[15px] bg-[#d4d0c8] flex items-center justify-center shadow-[inset_1px_1px_0_#fff,inset_-1px_-1px_0_#404040]"><svg class="w-[8px] h-[4px]"><use href="#down"/></svg></span>
        </div>
      </div>
    </div>
    <div class="flex justify-end gap-[6px] pr-[8px] pt-[10px]">
      <span class="w-[48px] h-[23px] flex items-center justify-center shadow-[inset_1px_1px_0_#fff,inset_-1px_-1px_0_#404040,inset_-2px_-2px_0_#808080]">OK</span>
      <span class="w-[66px] h-[23px] flex items-center justify-center shadow-[inset_1px_1px_0_#fff,inset_-1px_-1px_0_#404040,inset_-2px_-2px_0_#808080]">Cancel</span>
    </div>
  </div>

  <!-- red annotations -->
  <svg class="absolute left-0 top-0 w-[1357px] h-[653px] pointer-events-none" viewBox="0 0 1357 653" fill="none" stroke="#ed1c24" stroke-width="4.500" stroke-linecap="round">
    <path d="M50 125h68c8 0 12 4 12 12v9c0 8-4 11-12 11l-70 1c-8 0-15-4-15-12 0-10 6-21 17-21z"/>
    <path d="M1357 103H1126c-10 0-15 5-15 14v11c0 8 8 12 20 14 30 3 60 5 100 5 60 0 90-3 126-10"/>
    <path d="M1004 161h92c12 0 19 6 19 17v15c0 10-6 16-18 16h-88c-12 0-22-8-22-18v-14c0-9 7-16 17-16z"/>
    <path d="M416 314h500c12 0 20 6 20 19v80c0 14-8 20-22 20H420c-12 0-20-6-20-14v-90c0-9 6-15 16-15z"/>
    <g fill="#ed1c24" stroke="none" font-family="Liberation Serif" font-weight="700">
      <text x="108" y="143" font-size="16">1</text>
      <text x="1327" y="118" font-size="18" font-style="italic">2</text>
      <text x="1094" y="180" font-size="16">3</text>
      <text x="903" y="337" font-size="14">4</text>
    </g>
  </svg>
</div>
</body>
</html>
